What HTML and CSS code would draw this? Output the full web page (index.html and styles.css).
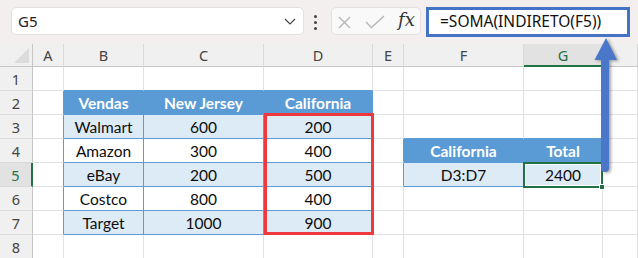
FILE: index.html
```html
<!DOCTYPE html>
<html>
<head>
<meta charset="utf-8">
<link rel="stylesheet" href="styles.css">
</head>
<body>
<div class="app">
  <div class="topbar">
    <div class="namebox">
      <span class="nb-text">G5</span>
      <svg class="chev" width="12" height="7" viewBox="0 0 12 7"><path d="M1 1 L6 6 L11 1" fill="none" stroke="#444" stroke-width="1.2"/></svg>
    </div>
    <div class="dots"><span></span><span></span><span></span></div>
    <div class="fxbox">
      <svg class="ic-x" width="13" height="13" viewBox="0 0 13 13"><path d="M1 1 L12 12 M12 1 L1 12" stroke="#b4b4b4" stroke-width="1.3" fill="none"/></svg>
      <svg class="ic-ok" width="20" height="14" viewBox="0 0 20 14"><path d="M1 7 L6.5 12.5 L19 1" stroke="#b4b4b4" stroke-width="1.3" fill="none"/></svg>
      <span class="fx">fx</span>
    </div>
    <div class="formula">=SOMA(INDIRETO(F5))</div>
  </div>

  <div class="sheet-wrap">
    <div class="sheet">
      <!-- header row -->
      <div class="ch corner"><span class="tri"></span></div>
      <div class="ch">A</div><div class="ch">B</div><div class="ch">C</div><div class="ch">D</div><div class="ch">E</div><div class="ch">F</div><div class="ch act">G</div><div class="ch"></div>

      <!-- row 1 -->
      <div class="rh">1</div>
      <div class="c"></div><div class="c tb"></div><div class="c tb"></div><div class="c tb"></div><div class="c"></div><div class="c"></div><div class="c"></div><div class="c"></div>

      <!-- row 2 -->
      <div class="rh">2</div>
      <div class="c lb"></div><div class="c th">Vendas</div><div class="c th">New Jersey</div><div class="c th">California</div><div class="c"></div><div class="c"></div><div class="c"></div><div class="c"></div>

      <!-- row 3 -->
      <div class="rh">3</div>
      <div class="c lb"></div><div class="c td odd">Walmart</div><div class="c td odd">600</div><div class="c td odd">200</div><div class="c"></div><div class="c tb"></div><div class="c tb"></div><div class="c"></div>

      <!-- row 4 -->
      <div class="rh">4</div>
      <div class="c lb"></div><div class="c td">Amazon</div><div class="c td">300</div><div class="c td">400</div><div class="c lb"></div><div class="c th">California</div><div class="c th">Total</div><div class="c"></div>

      <!-- row 5 -->
      <div class="rh act">5</div>
      <div class="c lb"></div><div class="c td odd">eBay</div><div class="c td odd">200</div><div class="c td odd">500</div><div class="c lb"></div><div class="c td odd">D3:D7</div><div class="c td odd">2400</div><div class="c"></div>

      <!-- row 6 -->
      <div class="rh">6</div>
      <div class="c lb"></div><div class="c td">Costco</div><div class="c td">800</div><div class="c td">400</div><div class="c"></div><div class="c"></div><div class="c"></div><div class="c"></div>

      <!-- row 7 -->
      <div class="rh">7</div>
      <div class="c lb"></div><div class="c td odd">Target</div><div class="c td odd">1000</div><div class="c td odd">900</div><div class="c"></div><div class="c"></div><div class="c"></div><div class="c"></div>

      <!-- row 8 -->
      <div class="rh">8</div>
      <div class="c"></div><div class="c"></div><div class="c"></div><div class="c"></div><div class="c"></div><div class="c"></div><div class="c"></div><div class="c"></div>
    </div>

    <div class="overlay">
      <div class="redbox"></div>
      <div class="sel"><span class="handle"></span></div>
    </div>
  </div>

  <svg class="arrow" width="34" height="146" viewBox="588 32 34 146">
    <line x1="605" y1="56" x2="605" y2="168" stroke="#4a77c9" stroke-width="8" stroke-linecap="round"/>
    <polygon points="594.5,60 617,60 606,38" fill="#4a77c9"/>
  </svg>
</div>
</body>
</html>
```

FILE: styles.css
```css
* { box-sizing: border-box; margin: 0; padding: 0; }
html, body { width: 638px; height: 258px; overflow: hidden; background: #fff; }
body { font-family: "Noto Sans", "Open Sans", sans-serif; }

.app { position: relative; width: 638px; height: 258px; overflow: hidden; }

/* formula bar */
.topbar {
  height: 44px;
  background: #f3efef;
  display: flex;
  align-items: flex-start;
  padding-top: 7px;
}
.namebox {
  margin-left: 11px;
  width: 293px;
  height: 28px;
  background: #fff;
  border: 1px solid #e4e0e0;
  border-radius: 5px;
  display: flex;
  align-items: center;
  justify-content: space-between;
  padding: 0 7px 0 6px;
}
.nb-text { font-size: 15px; color: #222; line-height: 1; }
.chev { display: block; }
.dots {
  margin-left: 10px;
  margin-top: 8px;
  width: 3px;
  display: flex;
  flex-direction: column;
  gap: 3px;
}
.dots span { width: 3px; height: 3px; background: #444; border-radius: 50%; }
.fxbox {
  margin-left: 14px;
  width: 90px;
  height: 28px;
  background: #faf9f9;
  border: 1px solid #e4e0e0;
  border-radius: 5px;
  display: flex;
  align-items: center;
  padding-left: 6px;
}
.ic-x { display: block; margin-top: 2px; }
.ic-ok { display: block; margin-left: 14px; margin-top: 2px; }
.fx {
  margin-left: 13px;
  font-family: "DejaVu Serif", "Liberation Serif", serif;
  font-style: italic;
  font-size: 18px;
  color: #333;
  line-height: 1;
  margin-top: -2px;
}
.formula {
  margin-left: 5px;
  width: 204px;
  height: 30px;
  background: #fff;
  border: 3px solid #4472c4;
  font-size: 15.5px;
  color: #111;
  line-height: 23px;
  padding-left: 11px;
  white-space: nowrap;
}

/* sheet grid */
.sheet-wrap { display: grid; }
.sheet, .overlay {
  grid-area: 1 / 1;
  display: grid;
  grid-template-columns: 33px 31px 80px 120px 109px 31px 120px 79px 1fr;
  grid-template-rows: 23px repeat(8, 24px);
}
.overlay { pointer-events: none; z-index: 2; }

.ch {
  background: #f0f0f0;
  border-right: 1px solid #dadada;
  border-bottom: 1px solid #c6c6c6;
  color: #444;
  font-size: 14.5px;
  display: flex;
  align-items: center;
  justify-content: center;
}
.ch.act {
  background: #e2e2e2;
  color: #217346;
  border-bottom: 2px solid #217346;
}
.corner { position: relative; border-right-color: #c6c6c6; }
.tri {
  position: absolute;
  right: 3px;
  bottom: 3px;
  width: 0; height: 0;
  border-left: 15px solid transparent;
  border-bottom: 15px solid #dcdcdc;
}
.rh {
  background: #f0f0f0;
  border-right: 1px solid #c6c6c6;
  border-bottom: 1px solid #dadada;
  color: #444;
  font-size: 14.5px;
  display: flex;
  align-items: center;
  justify-content: center;
}
.rh.act {
  background: #e2e2e2;
  color: #217346;
  border-right: 2px solid #217346;
}
.c {
  border-right: 1px solid #e1e1e1;
  border-bottom: 1px solid #e1e1e1;
  font-family: "Lato", "Open Sans", sans-serif;
  font-size: 15.5px;
  color: #0d0d0d;
  display: flex;
  align-items: center;
  justify-content: center;
  white-space: nowrap;
}
.c.lb { border-right-color: #5b9bd5; }
.c.tb { border-bottom-color: #5b9bd5; }
.c.th {
  background: #5b9bd5;
  border-color: #5b9bd5;
  color: #fff;
  font-weight: 700;
}
.c.td { border-color: #5b9bd5; background: #fff; }
.c.td.odd { background: #ddebf7; }

.redbox {
  grid-column: 5;
  grid-row: 4 / 9;
  margin: -2px -1px 0 0;
  border: 3px solid #f0393c;
}
.sel {
  grid-column: 8;
  grid-row: 6;
  margin: -1px 0 -1px -1px;
  border: 2px solid #217346;
  box-shadow: inset 0 0 0 1px #fff;
  position: relative;
}
.handle {
  position: absolute;
  right: -4px;
  bottom: -4px;
  width: 6px;
  height: 6px;
  background: #217346;
  border: 1px solid #fff;
}

.arrow {
  position: absolute;
  left: 588px;
  top: 32px;
  filter: drop-shadow(2px 1px 1.5px rgba(0,0,0,0.35));
  z-index: 5;
}
```
